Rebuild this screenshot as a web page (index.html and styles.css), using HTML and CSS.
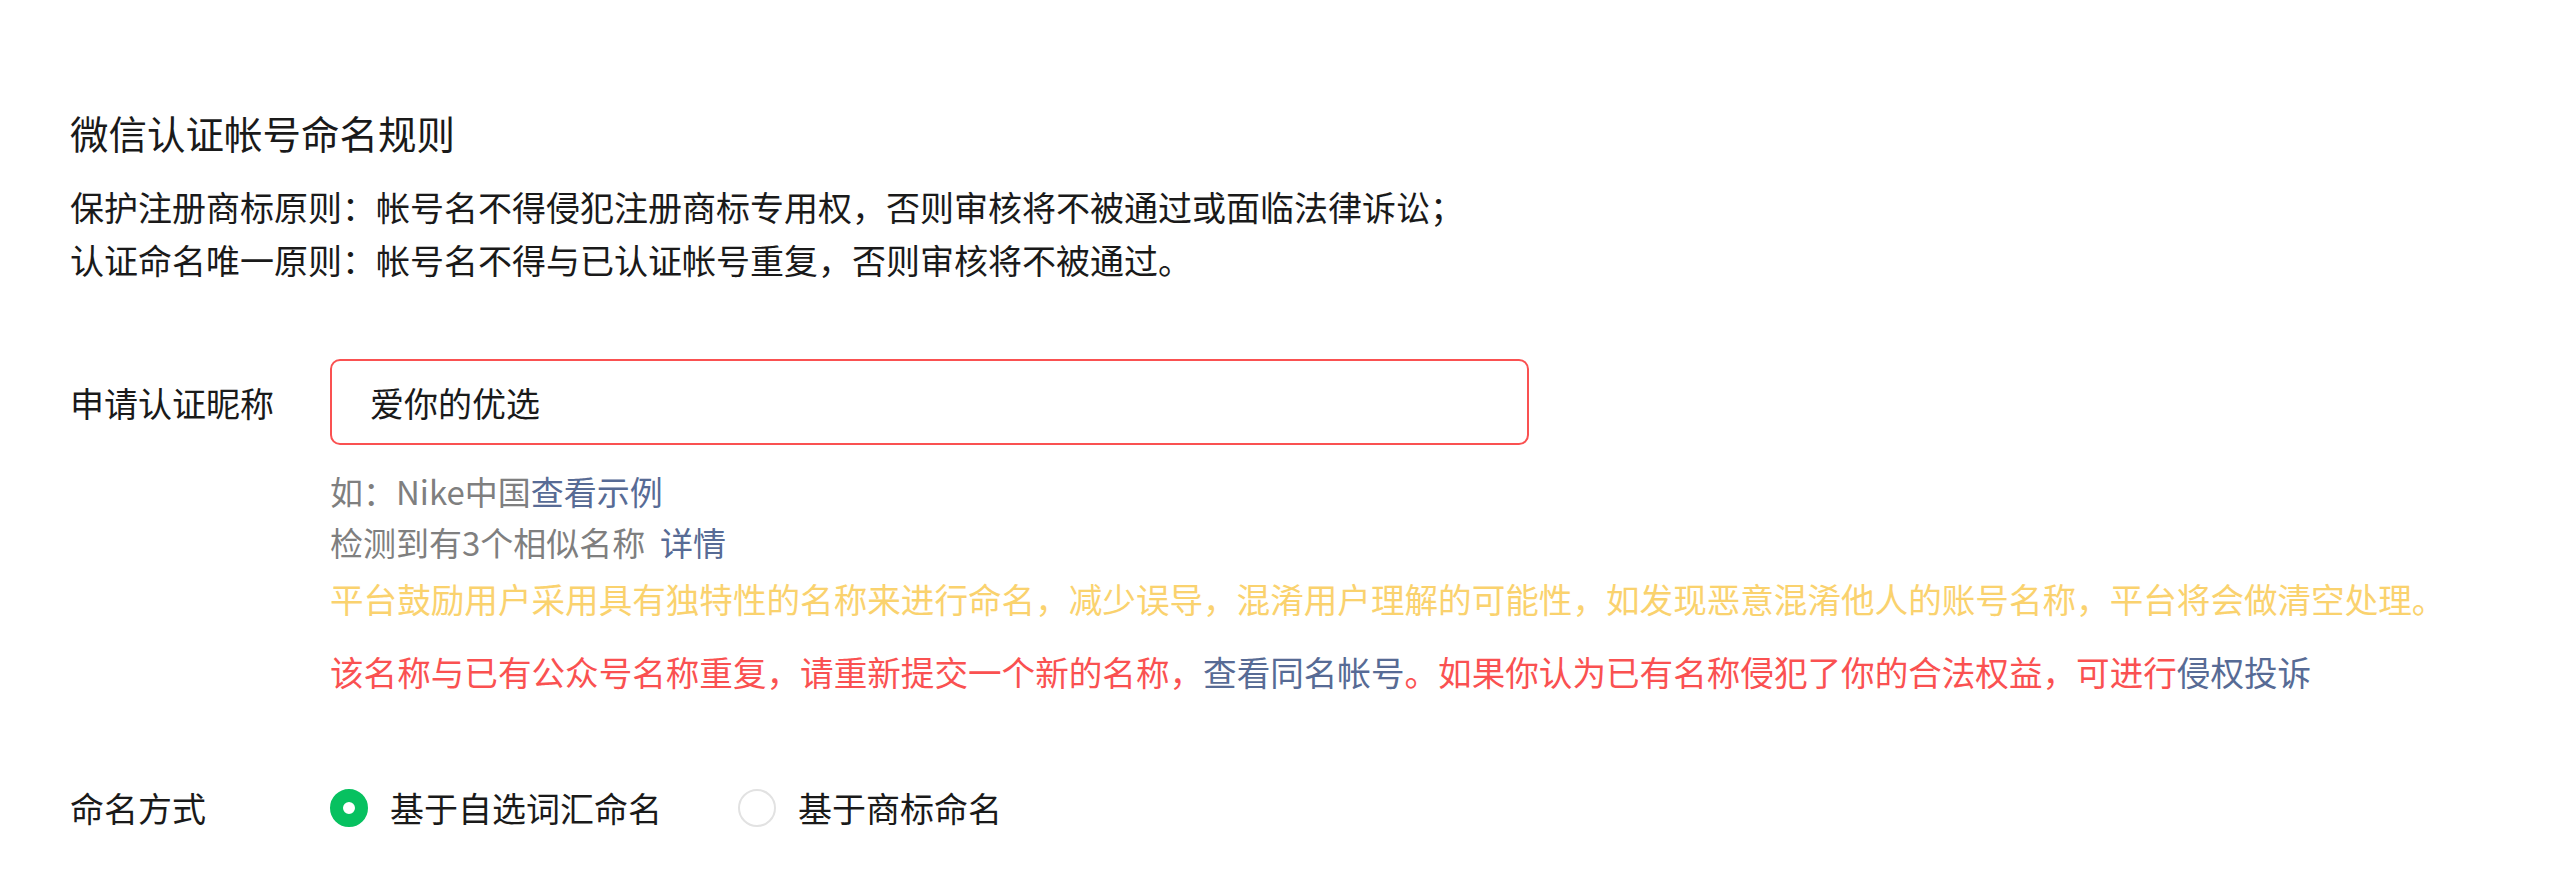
FILE: index.html
```html
<!DOCTYPE html>
<html lang="zh-CN">
<head>
    <meta charset="UTF-8">
    <title>微信认证帐号命名</title>
    <link rel="stylesheet" href="styles.css">
</head>
<body>
    <div class="page">
        <div class="rules">
            <h2 class="rules-title">微信认证帐号命名规则</h2>
            <p class="rules-line">保护注册商标原则：帐号名不得侵犯注册商标专用权，否则审核将不被通过或面临法律诉讼；</p>
            <p class="rules-line">认证命名唯一原则：帐号名不得与已认证帐号重复，否则审核将不被通过。</p>
        </div>

        <div class="form-row name-row">
            <label class="form-label">申请认证昵称</label>
            <div class="form-field">
                <input class="name-input is-error" type="text" value="爱你的优选">
            </div>
        </div>

        <div class="form-tips">
            <p class="tip">如：Nike中国<a class="link" href="#">查看示例</a></p>
            <p class="tip">检测到有3个相似名称&nbsp; <a class="link" href="#">详情</a></p>
            <p class="tip-warn">平台鼓励用户采用具有独特性的名称来进行命名，减少误导，混淆用户理解的可能性，如发现恶意混淆他人的账号名称，平台将会做清空处理。</p>
            <p class="tip-error">该名称与已有公众号名称重复，请重新提交一个新的名称，<a class="link" href="#">查看同名帐号</a>。如果你认为已有名称侵犯了你的合法权益，可进行<a class="link" href="#">侵权投诉</a></p>
        </div>

        <div class="form-row radio-row">
            <label class="form-label">命名方式</label>
            <div class="radio-group">
                <label class="radio checked"><span class="radio-icon"></span>基于自选词汇命名</label>
                <label class="radio"><span class="radio-icon"></span>基于商标命名</label>
            </div>
        </div>
    </div>
</body>
</html>
```

FILE: styles.css
```css
body {
    margin: 0;
    font-family: "Noto Sans CJK SC", "Noto Sans", sans-serif;
    color: #1a1a1a;
    background: #fff;
}
p, h2 {
    margin: 0;
}
.page {
    padding: 106px 70px 0;
}
.rules-title {
    font-size: 38.5px;
    font-weight: normal;
    line-height: 53px;
    margin-bottom: 21px;
}
.rules-line {
    font-size: 34px;
    line-height: 53px;
}
.form-row {
    display: flex;
    align-items: center;
}
.form-label {
    width: 260px;
    font-size: 34px;
    flex-shrink: 0;
}
.name-row {
    margin-top: 73px;
}
.name-input {
    box-sizing: border-box;
    width: 1199px;
    height: 86px;
    padding: 0 38px;
    border: 2px solid #e0e0e0;
    border-radius: 10px;
    font-family: inherit;
    font-size: 34px;
    color: #1a1a1a;
    outline: none;
}
.name-input.is-error {
    border-color: #fa5151;
}
.form-tips {
    margin: 21px 0 0 260px;
}
.tip {
    font-size: 33px;
    line-height: 51px;
    color: #7f7f7f;
}
.link {
    color: #576b95;
    text-decoration: none;
}
.tip-warn {
    margin-top: 5px;
    font-size: 33.6px;
    line-height: 51px;
    white-space: nowrap;
    color: #fad26e;
}
.tip-error {
    margin-top: 22px;
    font-size: 33.6px;
    line-height: 51px;
    color: #fa5151;
}
.radio-row {
    margin-top: 85px;
    height: 51px;
}
.radio-group {
    display: flex;
    gap: 76px;
}
.radio {
    display: flex;
    align-items: center;
    gap: 22px;
    font-size: 34px;
}
.radio-icon {
    box-sizing: border-box;
    width: 38px;
    height: 38px;
    border: 2px solid #e2e2e2;
    border-radius: 50%;
}
.radio.checked .radio-icon {
    border: 13px solid #07c160;
    background: #fff;
}
```
